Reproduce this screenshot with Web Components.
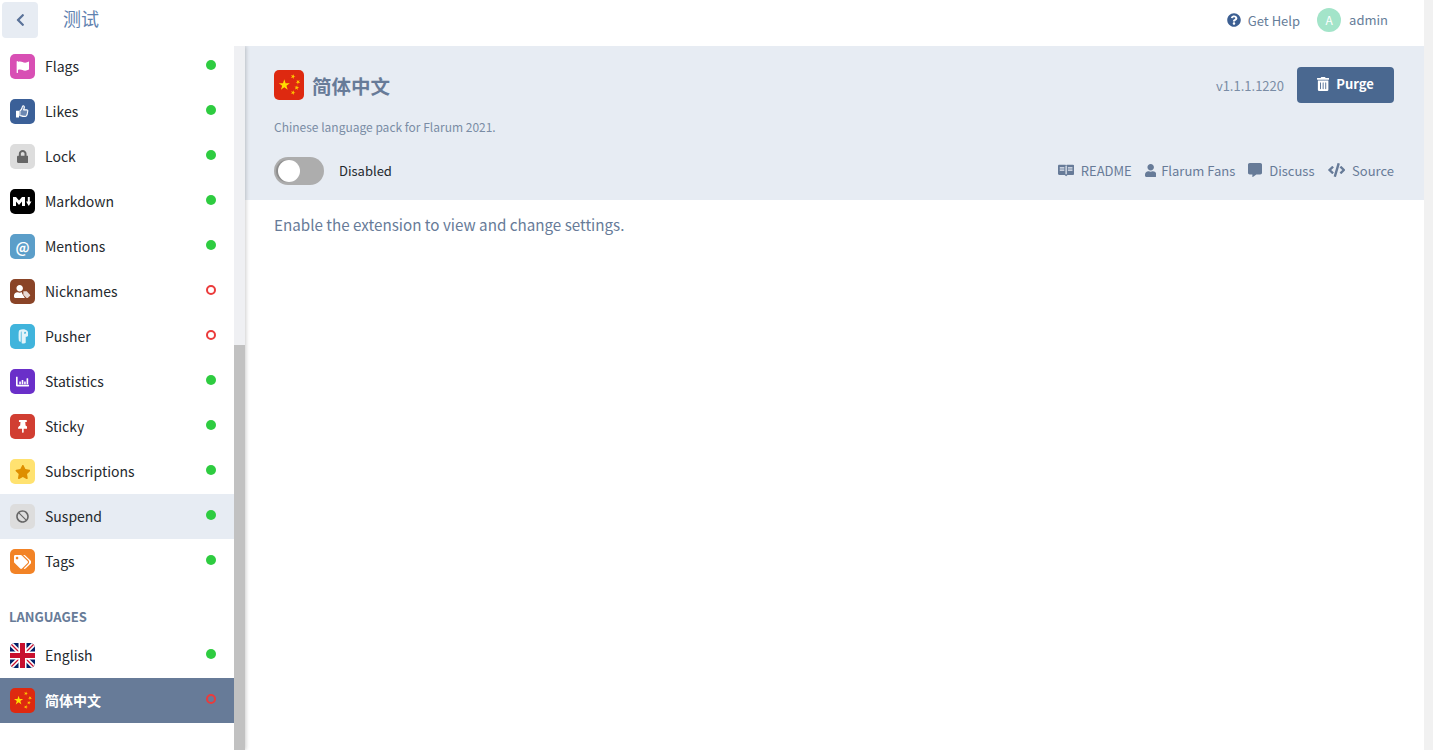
<!DOCTYPE html>
<html lang="en">
<head>
<meta charset="utf-8">
<title>测试 - Administration</title>
<style>
html, body { margin: 0; height: 100%; overflow: hidden; }
body { font-family: "Noto Sans CJK SC", "Noto Sans", sans-serif; background: #fff; }
</style>
</head>
<body>
<admin-app></admin-app>

<script>
const icons = {
    back: '<svg viewBox="0 0 320 512"><path fill="currentColor" d="M34.500 239 228.900 44.700c9.400-9.400 24.600-9.400 33.900 0l22.700 22.700c9.400 9.400 9.400 24.500 0 33.900L131.500 256l154 154.800c9.300 9.400 9.300 24.500 0 33.900l-22.700 22.700c-9.400 9.400-24.600 9.400-33.900 0L34.500 273c-9.400-9.400-9.400-24.600 0-34z"/></svg>',
    help: '<svg viewBox="0 0 512 512"><path fill="currentColor" d="M504 256c0 137-111 248-248 248S8 393 8 256 119 8 256 8s248 111 248 248zM262.700 90c-54.500 0-89.300 23-116.600 63.800-3.500 5.300-2.400 12.400 2.700 16.300l34.700 26.300c5.200 3.900 12.600 3 16.700-2.100 17.900-22.700 30.100-35.800 57.300-35.800 20.400 0 45.700 13.100 45.700 33 0 15-12.400 22.700-32.600 34-23.600 13.200-54.800 29.700-54.800 70.900V300c0 6.600 5.400 12 12 12h56c6.600 0 12-5.400 12-12v-1.300c0-28.600 83.400-29.700 83.400-107 0-58.200-60.400-102.300-117-102.300zM256 336c-25.400 0-46 20.600-46 46s20.600 46 46 46 46-20.600 46-46-20.600-46-46-46z"/></svg>',
    flag: '<svg viewBox="0 0 512 440"><path fill="currentColor" d="M336 60c-80 0-112-44-192-44-26 0-50 6-72 16V22C72 8 62 0 48 0S24 8 24 22v396c0 14 10 22 24 22s24-8 24-22V330c22-10 46-16 72-16 80 0 112 44 192 44 50 0 96-18 152-48V12c-56 30-102 48-152 48z"/></svg>',
    thumb: '<svg viewBox="0 0 512 512"><path fill="currentColor" d="M16 224h88c9 0 16 7 16 16v240c0 9-7 16-16 16H16c-9 0-16-7-16-16V240c0-9 7-16 16-16z"/><path fill="currentColor" fill-opacity=".25" stroke="currentColor" stroke-width="44" stroke-linejoin="round" d="M152 236c34-28 78-84 88-132 6-30 6-74 42-74 40 0 54 44 42 90-6 24-18 42-24 70h116c30 0 56 24 50 56-2 12-8 20-16 28 10 18 8 40-6 54 6 22 0 44-18 56 4 40-24 64-66 64h-50c-66 0-104-26-158-34z"/></svg>',
    lock: '<svg viewBox="0 0 448 512"><path fill="currentColor" d="M400 224h-24v-72C376 68 308 0 224 0S72 68 72 152v72H48c-26.500 0-48 21.500-48 48v192c0 26.500 21.500 48 48 48h352c26.500 0 48-21.500 48-48V272c0-26.500-21.500-48-48-48zm-104 0H152v-72c0-39.700 32.300-72 72-72s72 32.300 72 72v72z"/></svg>',
    markdown: '<svg viewBox="0 0 18.500 9"><path fill="currentColor" d="M0 0h3l3 3.500L9 0h3v9H9V4.500L6 8 3 4.500V9H0zM14.800 0h2v4.500h1.700L15.800 9l-2.700-4.500h1.700z"/></svg>',
    user: '<svg viewBox="0 0 448 512"><path fill="currentColor" d="M224 256c70.700 0 128-57.300 128-128S294.700 0 224 0 96 57.300 96 128s57.300 128 128 128zm89.600 32h-16.700c-22.200 10.200-46.900 16-72.900 16s-50.600-5.800-72.900-16h-16.700C60.200 288 0 348.200 0 422.400V464c0 26.500 21.500 48 48 48h352c26.500 0 48-21.500 48-48v-41.600c0-74.200-60.200-134.400-134.400-134.400z"/></svg>',
    userTag: '<svg viewBox="0 0 640 512"><path fill="currentColor" d="M224 256c70.700 0 128-57.300 128-128S294.700 0 224 0 96 57.300 96 128s57.300 128 128 128zm89.600 32h-16.700c-22.200 10.200-46.900 16-72.900 16s-50.600-5.800-72.900-16h-16.700C60.200 288 0 348.200 0 422.400V464c0 26.500 21.500 48 48 48h352c9 0 20-4 26-10L330 356c-12-12-18-38-16-68z"/><path fill="currentColor" fill-opacity=".8" d="M630 380 510 260c-6-6-14-9-22-9H384c-9 0-16 7-16 16v104c0 8 3 16 9 22l120 120c12 12 33 12 45 0l88-88c12-12 12-33 0-45z"/></svg>',
    pusher: '<svg viewBox="0 0 400 512"><path fill="currentColor" fill-opacity=".85" d="M90 30c80-40 210-30 260 30 40 48 44 120 26 170-14 36-50 40-78 32v200c0 30-100 50-138 26-6-120 0-280-6-400-10-8-16-4-22 6-4 110 0 220-4 340C90 430 64 410 60 380 52 290 52 190 58 100c2-30 12-56 32-70zM270 96c-22 4-30 34-22 66 30 10 58-8 58-36 0-18-16-34-36-30z"/></svg>',
    chart: '<svg viewBox="0 0 512 512"><path fill="currentColor" d="M496 384c9 0 16 7 16 16v32c0 9-7 16-16 16H32c-18 0-32-14-32-32V80c0-9 7-16 16-16h32c9 0 16 7 16 16v304zM128 272c0-9 7-16 16-16h32c9 0 16 7 16 16v80c0 9-7 16-16 16h-32c-9 0-16-7-16-16zM224 208c0-9 7-16 16-16h32c9 0 16 7 16 16v144c0 9-7 16-16 16h-32c-9 0-16-7-16-16zM320 272c0-9 7-16 16-16h32c9 0 16 7 16 16v80c0 9-7 16-16 16h-32c-9 0-16-7-16-16zM416 144c0-9 7-16 16-16h32c9 0 16 7 16 16v208c0 9-7 16-16 16h-32c-9 0-16-7-16-16z"/></svg>',
    pin: '<svg viewBox="0 0 384 512"><path fill="currentColor" d="M298 214 286 80h38c13 0 24-11 24-24V24c0-13-11-24-24-24H60C47 0 36 11 36 24v32c0 13 11 24 24 24h38L86 214C38 236 0 276 0 320c0 13 11 24 24 24h136v126l24 42c4 7 12 7 16 0l24-42V344h136c13 0 24-11 24-24 0-45-39-84-86-106z"/></svg>',
    star: '<svg viewBox="0 0 576 512"><path fill="currentColor" d="M259 18 194 150 47 171c-26 4-37 36-18 55l106 103-25 146c-5 27 23 47 46 35l131-69 131 69c24 12 52-8 47-35l-25-146 106-103c19-19 8-51-18-55l-147-21-65-132c-12-24-46-24-58 0z"/></svg>',
    ban: '<svg viewBox="0 0 512 512"><path fill="currentColor" d="M256 8C119 8 8 119 8 256s111 248 248 248 248-111 248-248S393 8 256 8zm130 118c68 68 73 174 19 248L138 107c74-54 180-49 248 19zM126 386c-68-68-73-174-19-248l267 267c-74 54-180 49-248-19z"/></svg>',
    tags: '<svg viewBox="0 0 640 512"><path fill="currentColor" d="M497.900 225.900 286.100 14.100A48 48 0 0 0 252.100 0H48C21.500 0 0 21.500 0 48v204.100a48 48 0 0 0 14.100 33.900l211.900 211.900c18.700 18.700 49.100 18.700 67.900 0l204.100-204.100c18.700-18.700 18.700-49.100-.1-67.900zM112 160c-26.500 0-48-21.500-48-48s21.500-48 48-48 48 21.500 48 48-21.500 48-48 48zm513.900 133.800L421.800 497.900c-18.700 18.700-49.100 18.700-67.900 0l-.4-.4L527.600 323.500c17-17 26.400-39.600 26.400-63.600s-9.400-46.600-26.400-63.600L331.400 0h48.700a48 48 0 0 1 33.900 14.100l211.900 211.800c18.700 18.700 18.700 49.100 0 67.900z"/></svg>',
    trash: '<svg viewBox="0 0 448 512"><path fill="currentColor" d="M32 464a48 48 0 0 0 48 48h288a48 48 0 0 0 48-48V128H32zm272-256a16 16 0 0 1 32 0v224a16 16 0 0 1-32 0zm-96 0a16 16 0 0 1 32 0v224a16 16 0 0 1-32 0zm-96 0a16 16 0 0 1 32 0v224a16 16 0 0 1-32 0zM432 32H312l-9.400-18.700A24 24 0 0 0 281.100 0H166.800a23.700 23.700 0 0 0-21.400 13.300L136 32H16A16 16 0 0 0 0 48v32a16 16 0 0 0 16 16h416a16 16 0 0 0 16-16V48a16 16 0 0 0-16-16z"/></svg>',
    book: '<svg viewBox="0 0 640 512"><path fill="currentColor" d="M48 32h240c18 0 32 14 32 32v0c0-18 14-32 32-32h240c26 0 48 22 48 48v304c0 26-22 48-48 48H376l-56 48-56-48H48c-26 0-48-22-48-48V80c0-26 22-48 48-48z"/><path fill="#e7ecf3" d="M296 70h48v330h-48zM70 130h180v44H70zm0 90h180v44H70zm320-90h180v44H390zm0 90h180v44H390z"/></svg>',
    comment: '<svg viewBox="0 0 512 512"><path fill="currentColor" d="M448 0H64C29 0 0 29 0 64v288c0 35 29 64 64 64h96v84c0 10 11 16 19 10l125-94h144c35 0 64-29 64-64V64c0-35-29-64-64-64z"/></svg>',
    code: '<svg viewBox="0 0 640 512"><path fill="currentColor" d="m278.900 511.500-61-17.700c-6.400-1.800-10-8.500-8.200-14.900L346.200 8.700c1.800-6.400 8.500-10 14.900-8.200l61 17.700c6.400 1.800 10 8.500 8.200 14.900L293.800 503.300c-1.900 6.400-8.500 10.100-14.900 8.200zm-114-112.200 43.500-46.400c4.600-4.900 4.300-12.700-.8-17.200L117 256l90.600-79.700c5.100-4.500 5.500-12.300.8-17.200l-43.500-46.400c-4.500-4.800-12.100-5.100-17-.5L3.800 247.200c-5.100 4.700-5.100 12.800 0 17.500l144.100 135.100c4.900 4.600 12.500 4.400 17-.5zm327.200.6 144.100-135.100c5.100-4.700 5.100-12.800 0-17.500L492.100 112.100c-4.800-4.500-12.400-4.300-17 .5L431.600 159c-4.600 4.900-4.300 12.700.8 17.200L523 256l-90.600 79.700c-5.100 4.500-5.500 12.300-.8 17.200l43.500 46.400c4.500 4.900 12.100 5.100 17 .6z"/></svg>'
}

const star5 = 'M0-1 .225-.31.951-.31.363.118.588.809 0 .382-.588.809-.363.118-.951-.31-.225-.31z'
const cnFlag = `<svg viewBox="0 0 30 30" width="100%" height="100%" style="display:block">
    <rect width="30" height="30" fill="#de2910"/>
    <path fill="#ffde00" transform="translate(10.300 15) scale(5.800)" d="${star5}"/>
    <path fill="#ffc800" transform="translate(19 6.500) rotate(20) scale(2.500)" d="${star5}"/>
    <path fill="#ffc800" transform="translate(24 12) rotate(40) scale(2.500)" d="${star5}"/>
    <path fill="#ffc800" transform="translate(22.700 17.700) rotate(10) scale(2.500)" d="${star5}"/>
    <path fill="#ffc800" transform="translate(19 22.700) rotate(20) scale(2.500)" d="${star5}"/>
</svg>`
const gbFlag = `<svg viewBox="0 0 25 25" width="100%" height="100%" style="display:block">
    <rect width="25" height="25" fill="#012169"/>
    <path d="M0 0 25 25M25 0 0 25" stroke="#fff" stroke-width="4.500"/>
    <path d="M0 0 25 25M25 0 0 25" stroke="#c8102e" stroke-width="1.300"/>
    <path d="M12.500 0V25M0 12.500H25" stroke="#fff" stroke-width="8"/>
    <path d="M12.500 0V25M0 12.500H25" stroke="#c8102e" stroke-width="5"/>
</svg>`

class AdminIcon extends HTMLElement {
    connectedCallback() {
        const name = this.getAttribute('name')
        const size = this.getAttribute('size') || '14px'
        this.attachShadow({ mode: 'open' })
        this.shadowRoot.innerHTML = `
        <style>
        :host { display: inline-flex; align-items: center; justify-content: center; height: ${size}; flex: none; }
        svg { height: 100%; display: block; }
        </style>
        ${icons[name] || ''}`
    }
}
customElements.define('admin-icon', AdminIcon)

class AdminHeader extends HTMLElement {
    constructor() {
        super()
        this.attachShadow({ mode: 'open' })
        this.shadowRoot.innerHTML = `
        <style>
        :host { display: flex; align-items: center; height: 46px; background: #fff; box-sizing: border-box; padding: 2px 36px 8px 2px; }
        .back { width: 36px; height: 36px; border-radius: 4px; background: #e7ecf3; color: #5a7299; display: flex; align-items: center; justify-content: center; }
        .title { margin: -4px 0 0 25px; font-size: 18px; line-height: 36px; color: #5f82b0; }
        .right { margin-left: auto; display: flex; align-items: center; font-size: 13px; color: #667d99; }
        .help { display: flex; align-items: center; gap: 7px; }
        .help admin-icon { color: #3c5f92; }
        .avatar { width: 24px; height: 24px; border-radius: 50%; background: #a3e4c9; color: #fff; font-size: 12px; line-height: 24px; text-align: center; margin-left: 17px; }
        .name { margin-left: 8px; margin-top: -1px; }
        </style>
        <div class="back"><admin-icon name="back" size="14px"></admin-icon></div>
        <div class="title">测试</div>
        <div class="right">
            <div class="help"><admin-icon name="help" size="14px"></admin-icon><span>Get Help</span></div>
            <div class="avatar">A</div>
            <div class="name">admin</div>
        </div>`
    }
}
customElements.define('admin-header', AdminHeader)

class NavItem extends HTMLElement {
    constructor() {
        super()
        this.attachShadow({ mode: 'open' })
        this.shadowRoot.innerHTML = `
        <style>
        :host { display: flex; align-items: center; height: 45px; padding: 0 18px 0 10px; box-sizing: border-box; font-size: 14px; color: #24292e; }
        :host([hover]) { background: #e7ecf3; }
        :host([active]) { background: #677b98; color: #fff; font-weight: 700; }
        .tile { width: 25px; height: 25px; border-radius: 5px; overflow: hidden; display: flex; align-items: center; justify-content: center; flex: none; margin-right: 10px; }
        .label { flex: 1; margin-top: -2px; }
        .dot { width: 10px; height: 10px; border-radius: 50%; box-sizing: border-box; background: #2ecc40; margin-top: -3px; }
        :host([off]) .dot { background: transparent; border: 2px solid #eb3b3b; }
        </style>
        <div class="tile"><slot name="tile"></slot></div>
        <div class="label"><slot></slot></div>
        <div class="dot"></div>`
    }
    connectedCallback() {
        const tile = this.shadowRoot.querySelector('.tile')
        if(this.hasAttribute('bg')) tile.style.background = this.getAttribute('bg')
        if(this.hasAttribute('fg')) tile.style.color = this.getAttribute('fg')
    }
}
customElements.define('nav-item', NavItem)

class AdminSidebar extends HTMLElement {
    constructor() {
        super()
        this.attachShadow({ mode: 'open' })
        this.shadowRoot.innerHTML = `
        <style>
        :host { display: flex; width: 245px; flex: none; height: 704px; background: #fff; position: relative; z-index: 1; box-shadow: 1px 0 4px rgba(0,0,0,.2); clip-path: inset(0 -10px 0 0); }
        .list { width: 234px; overflow: hidden; flex: none; }
        .inner { margin-top: -2px; }
        .track { width: 11px; background: #eff0f3; display: flex; flex-direction: column; }
        .spacer { height: 299px; flex: none; }
        .thumb { flex: 1; background: #c1c1c1; }
        </style>
        <div class="list"><div class="inner"><slot></slot></div></div>
        <div class="track"><div class="spacer"></div><div class="thumb"></div></div>`
    }
}
customElements.define('admin-sidebar', AdminSidebar)

class NavHeading extends HTMLElement {
    constructor() {
        super()
        this.attachShadow({ mode: 'open' })
        this.shadowRoot.innerHTML = `
        <style>
        :host { display: block; height: 49px; box-sizing: border-box; padding: 23px 0 0 9px; font-size: 13px; line-height: 20px; font-weight: 700; color: #677b98; text-transform: uppercase; }
        </style>
        <slot></slot>`
    }
}
customElements.define('nav-heading', NavHeading)

class ExtHeader extends HTMLElement {
    constructor() {
        super()
        this.attachShadow({ mode: 'open' })
        this.shadowRoot.innerHTML = `
        <style>
        :host { display: block; background: #e7ecf3; height: 154px; box-sizing: border-box; padding: 21px 30px 0 29px; }
        .top { display: flex; align-items: center; height: 36px; }
        .logo { width: 30px; height: 30px; border-radius: 5px; overflow: hidden; }
        h2 { margin: 2px 0 0 8px; font-size: 19.500px; line-height: 30px; font-weight: 700; color: #677b98; }
        .version { margin-left: auto; margin-right: 13px; font-size: 13px; color: #7a8ca5; }
        .purge { width: 97px; height: 36px; box-sizing: border-box; border-radius: 4px; background: #4a6890; color: #fff; font-size: 13px; line-height: 34px; font-weight: 700; display: flex; align-items: center; justify-content: center; gap: 7px; padding-bottom: 2px; }
        .desc { margin-top: 15px; font-size: 12px; line-height: 18px; color: #7a8ca5; }
        .bottom { display: flex; align-items: center; margin-top: 21px; height: 28px; }
        .toggle { width: 50px; height: 28px; border-radius: 14px; background: #adadad; position: relative; box-sizing: border-box; }
        .knob { position: absolute; left: 4px; top: 3px; width: 22px; height: 22px; border-radius: 50%; background: #fff; box-shadow: -2px 0 1px #8b8b8b; }
        .status { margin: -2px 0 0 15px; font-size: 13px; color: #24292e; }
        .links { margin: -2px 0 0 auto; display: flex; align-items: center; font-size: 13px; color: #677b98; }
        .links span { display: inline-flex; align-items: center; margin-left: 13px; }
        .links admin-icon { margin-right: 6px; }
        </style>
        <div class="top">
            <div class="logo">${cnFlag}</div>
            <h2>简体中文</h2>
            <div class="version">v1.1.1.1220</div>
            <div class="purge"><admin-icon name="trash" size="14px"></admin-icon>Purge</div>
        </div>
        <div class="desc">Chinese language pack for Flarum 2021.</div>
        <div class="bottom">
            <div class="toggle"><div class="knob"></div></div>
            <div class="status">Disabled</div>
            <div class="links">
                <span><admin-icon name="book" size="13px" style="margin-right:7px"></admin-icon>README</span>
                <span><admin-icon name="user" size="13px" style="margin-right:5px"></admin-icon>Flarum Fans</span>
                <span><admin-icon name="comment" size="14px" style="margin-right:7px"></admin-icon>Discuss</span>
                <span><admin-icon name="code" size="14px" style="margin-right:7px"></admin-icon>Source</span>
            </div>
        </div>`
    }
}
customElements.define('ext-header', ExtHeader)

class AdminApp extends HTMLElement {
    constructor() {
        super()
        this.attachShadow({ mode: 'open' })
        this.shadowRoot.innerHTML = `
        <style>
        :host { display: flex; height: 750px; width: 1433px; overflow: hidden; }
        .page { width: 1424px; flex: none; display: flex; flex-direction: column; }
        .body { display: flex; flex: 1; min-height: 0; }
        .content { flex: 1; min-width: 0; }
        .notice { padding: 12px 0 0 29px; font-size: 15.200px; line-height: 24px; color: #677b98; }
        .bar { flex: 1; background: #f1f1f1; }
        </style>
        <div class="page">
            <admin-header></admin-header>
            <div class="body">
                <admin-sidebar>
                    <nav-item bg="#d84fb4" fg="#fff"><admin-icon slot="tile" name="flag" size="12px"></admin-icon>Flags</nav-item>
                    <nav-item bg="#3b6098" fg="#fff"><admin-icon slot="tile" name="thumb" size="13px"></admin-icon>Likes</nav-item>
                    <nav-item bg="#ddd" fg="#666"><admin-icon slot="tile" name="lock" size="13px"></admin-icon>Lock</nav-item>
                    <nav-item bg="#000" fg="#fff"><admin-icon slot="tile" name="markdown" size="9px"></admin-icon>Markdown</nav-item>
                    <nav-item bg="#5b9ec9" fg="#fff"><span slot="tile" style="font-size:14px;font-weight:700">@</span>Mentions</nav-item>
                    <nav-item bg="#8a4427" fg="#fff" off><admin-icon slot="tile" name="userTag" size="13px"></admin-icon>Nicknames</nav-item>
                    <nav-item bg="#40b4dc" fg="#fff" off><admin-icon slot="tile" name="pusher" size="15px"></admin-icon>Pusher</nav-item>
                    <nav-item bg="#6a2fc9" fg="#fff"><admin-icon slot="tile" name="chart" size="13px"></admin-icon>Statistics</nav-item>
                    <nav-item bg="#d13e32" fg="#fff"><admin-icon slot="tile" name="pin" size="13px"></admin-icon>Sticky</nav-item>
                    <nav-item bg="#ffe270" fg="#de8e00"><admin-icon slot="tile" name="star" size="14px"></admin-icon>Subscriptions</nav-item>
                    <nav-item bg="#ddd" fg="#666" hover><admin-icon slot="tile" name="ban" size="13px"></admin-icon>Suspend</nav-item>
                    <nav-item bg="#f28326" fg="#fff"><admin-icon slot="tile" name="tags" size="14px"></admin-icon>Tags</nav-item>
                    <nav-heading>Languages</nav-heading>
                    <nav-item><span slot="tile" style="display:block;width:25px;height:25px">${gbFlag}</span>English</nav-item>
                    <nav-item active off><span slot="tile" style="display:block;width:25px;height:25px">${cnFlag}</span>简体中文</nav-item>
                </admin-sidebar>
                <div class="content">
                    <ext-header></ext-header>
                    <div class="notice">Enable the extension to view and change settings.</div>
                </div>
            </div>
        </div>
        <div class="bar"></div>`
    }
}
customElements.define('admin-app', AdminApp)
</script>
</body>
</html>
